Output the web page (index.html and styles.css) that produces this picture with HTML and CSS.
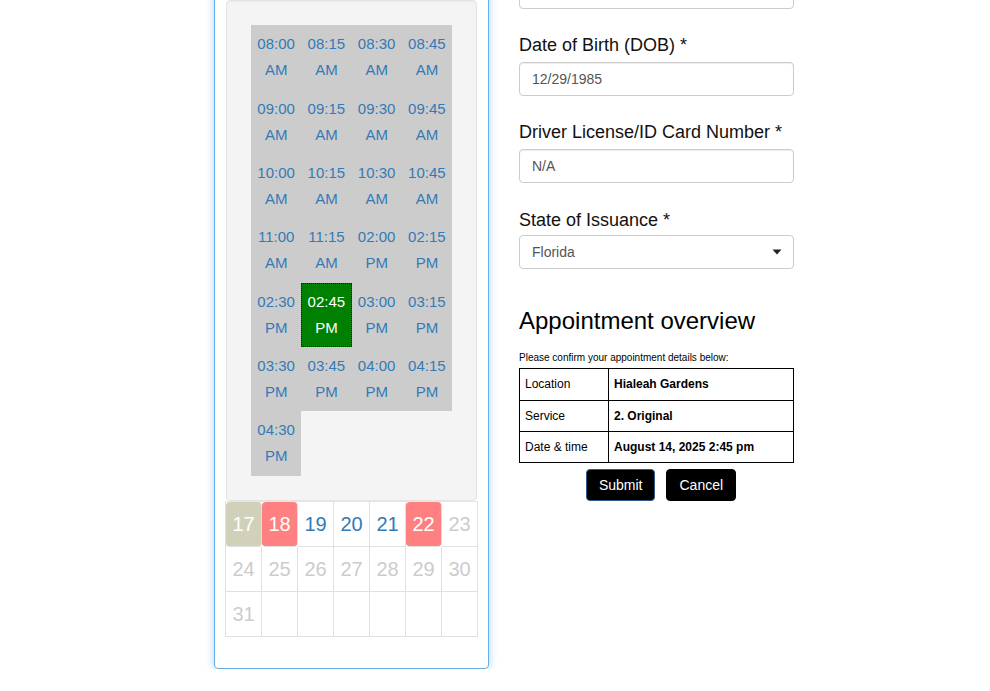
FILE: index.html
```html
<!DOCTYPE html>
<html>
<head>
<meta charset="utf-8">
<link rel="stylesheet" href="styles.css">
</head>
<body>
<div class="page">
  <div class="picker">
    <div class="well">
      <div class="slots">
        <div class="slot">08:00 AM</div>
        <div class="slot">08:15 AM</div>
        <div class="slot">08:30 AM</div>
        <div class="slot">08:45 AM</div>
        <div class="slot">09:00 AM</div>
        <div class="slot">09:15 AM</div>
        <div class="slot">09:30 AM</div>
        <div class="slot">09:45 AM</div>
        <div class="slot">10:00 AM</div>
        <div class="slot">10:15 AM</div>
        <div class="slot">10:30 AM</div>
        <div class="slot">10:45 AM</div>
        <div class="slot">11:00 AM</div>
        <div class="slot">11:15 AM</div>
        <div class="slot">02:00 PM</div>
        <div class="slot">02:15 PM</div>
        <div class="slot">02:30 PM</div>
        <div class="slot active">02:45 PM</div>
        <div class="slot">03:00 PM</div>
        <div class="slot">03:15 PM</div>
        <div class="slot">03:30 PM</div>
        <div class="slot">03:45 PM</div>
        <div class="slot">04:00 PM</div>
        <div class="slot">04:15 PM</div>
        <div class="slot">04:30 PM</div>
      </div>
    </div>
    <div class="cal">
      <div class="day today">17</div>
      <div class="day busy">18</div>
      <div class="day open">19</div>
      <div class="day open">20</div>
      <div class="day open">21</div>
      <div class="day busy">22</div>
      <div class="day off">23</div>
      <div class="day off">24</div>
      <div class="day off">25</div>
      <div class="day off">26</div>
      <div class="day off">27</div>
      <div class="day off">28</div>
      <div class="day off">29</div>
      <div class="day off">30</div>
      <div class="day off">31</div>
      <div class="day"></div>
      <div class="day"></div>
      <div class="day"></div>
      <div class="day"></div>
      <div class="day"></div>
      <div class="day"></div>
    </div>
  </div>

  <div class="form">
    <div class="field">
      <div class="input"></div>
    </div>
    <div class="field">
      <label class="label">Date of Birth (DOB) *</label>
      <div class="input">12/29/1985</div>
    </div>
    <div class="field">
      <label class="label">Driver License/ID Card Number *</label>
      <div class="input">N/A</div>
    </div>
    <div class="field tight">
      <label class="label">State of Issuance *</label>
      <div class="input select">
        <span>Florida</span>
        <svg class="caret" width="10" height="6" viewBox="0 0 10 6"><path d="M0.5 0.5 H9.5 L5 5.5 Z" fill="#222"/></svg>
      </div>
    </div>

    <h3 class="heading">Appointment overview</h3>
    <p class="note">Please confirm your appointment details below:</p>
    <table class="summary">
      <colgroup><col class="c1"><col class="c2"></colgroup>
      <tr><td>Location</td><td class="val">Hialeah Gardens</td></tr>
      <tr><td>Service</td><td class="val">2. Original</td></tr>
      <tr><td>Date &amp; time</td><td class="val">August 14, 2025 2:45 pm</td></tr>
    </table>
    <div class="actions">
      <button class="btn primary">Submit</button>
      <button class="btn">Cancel</button>
    </div>
  </div>
</div>
</body>
</html>
```

FILE: styles.css
```css
html, body {
  margin: 0;
  padding: 0;
  background: #fff;
  font-family: "Liberation Sans", Arial, sans-serif;
}

.page {
  display: flex;
  align-items: flex-start;
  gap: 30px;
  margin-left: 214px;
}

.picker {
  width: 275px;
  box-sizing: border-box;
  margin-top: -12px;
  padding: 11px 11px 31px;
  border: 1px solid #66afe9;
  border-radius: 4px;
  box-shadow: 0 0 8px rgba(102, 175, 233, 0.55);
}

.well {
  background: #f4f4f4;
  border: 1px solid #e3e3e3;
  border-radius: 4px;
  padding: 24px;
  box-shadow: inset 0 1px 1px rgba(0, 0, 0, 0.04);
}

.slots {
  display: grid;
  grid-template-columns: repeat(4, 1fr);
}

.slot {
  background: #cccccc;
  color: #337ab7;
  font-size: 15px;
  line-height: 26px;
  padding: 6.2px 0;
  text-align: center;
}

.slot.active {
  background: #008000;
  color: #fff;
  outline: 1px dotted #1a1a1a;
  outline-offset: -1px;
}

.cal {
  display: grid;
  grid-template-columns: repeat(7, 36px);
  width: 253px;
  box-sizing: border-box;
  margin-left: -1px;
  border-left: 1px solid #e0e0e0;
  border-top: 1px solid #e6e6e6;
}

.day {
  height: 45px;
  line-height: 44px;
  box-sizing: border-box;
  text-align: center;
  font-size: 20px;
  border-right: 1px solid #e0e0e0;
  border-bottom: 1px solid #e0e0e0;
}

.day.today {
  background: #d1d1b9;
  color: #fff;
  border-radius: 4px;
}

.day.busy {
  background: #ff8080;
  color: #fff;
  border-radius: 4px;
}

.day.open {
  color: #337ab7;
}

.day.off {
  color: #cccccc;
}

.form {
  width: 275px;
  margin-top: -25px;
}

.field {
  margin-bottom: 23px;
}

.label {
  display: block;
  font-size: 18px;
  line-height: 26px;
  margin-bottom: 4px;
  color: #111;
}

.field.tight {
  padding-top: 1px;
}

.field.tight .label {
  margin-bottom: 2px;
}

.input {
  height: 34px;
  box-sizing: border-box;
  border: 1px solid #ccc;
  border-radius: 4px;
  padding: 0 12px;
  font-size: 14px;
  color: #555;
  display: flex;
  align-items: center;
  box-shadow: inset 0 1px 1px rgba(0, 0, 0, 0.075);
  background: #fff;
}

.input.select {
  justify-content: space-between;
  padding-right: 11px;
  box-shadow: none;
}

.caret {
  display: block;
}

.heading {
  font-size: 24px;
  font-weight: normal;
  line-height: 26.4px;
  margin: 39px 0 0;
  color: #000;
}

.note {
  font-size: 10px;
  line-height: 12px;
  margin: 18px 0 4px;
  color: #000;
}

.summary {
  width: 275px;
  border-collapse: collapse;
  table-layout: fixed;
  font-size: 12px;
  color: #000;
}

.summary .c1 {
  width: 89px;
}

.summary td {
  border: 1px solid #000;
  padding: 8px 5px;
  line-height: 14.2px;
}

.summary td.val {
  font-weight: bold;
}

.actions {
  display: flex;
  justify-content: center;
  gap: 11px;
  padding-left: 9px;
  margin-top: 6px;
}

.btn {
  font-family: "Liberation Sans", Arial, sans-serif;
  font-size: 14px;
  line-height: 20px;
  padding: 5px 12px;
  background: #000;
  color: #fff;
  border: 1px solid #000;
  border-radius: 4px;
}

.btn.primary {
  border-color: #2a5b8c;
}
```
